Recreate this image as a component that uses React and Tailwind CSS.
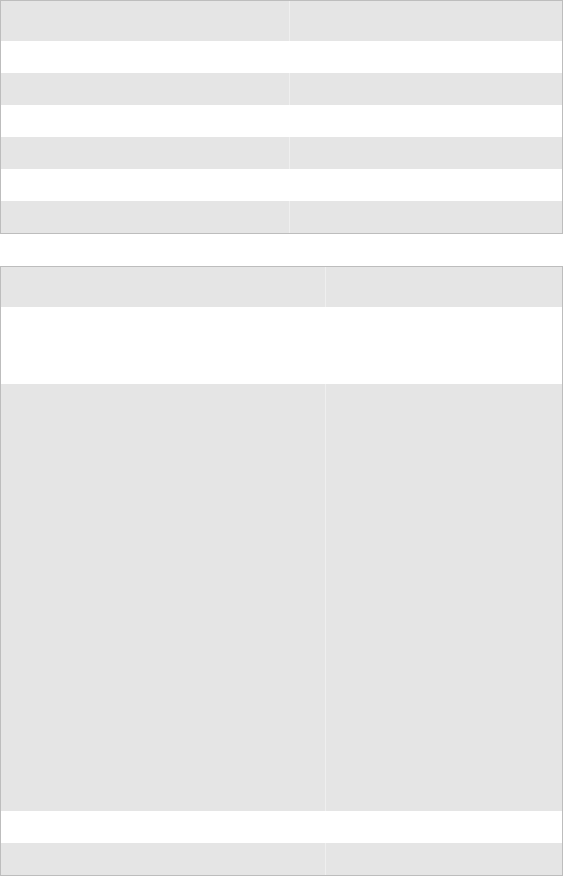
export default function App() {
  const t1 = [
    { h: "h-[40px]", g: true },
    { h: "h-[32px]", g: false },
    { h: "h-[32px]", g: true },
    { h: "h-[32px]", g: false },
    { h: "h-[32px]", g: true },
    { h: "h-[32px]", g: false },
    { h: "h-[32px]", g: true },
  ];
  const t2 = [
    { h: "h-[40px]", g: true },
    { h: "h-[77px]", g: false },
    { h: "h-[427px]", g: true },
    { h: "h-[32px]", g: false },
    { h: "h-[32px]", g: true },
  ];
  return (
    <div className="w-[563px] bg-white flex flex-col gap-[32px]" style={{ fontFamily: '"Liberation Sans", Arial, sans-serif' }}>
      <div className="border border-[#bdbdbd] flex flex-col">
        {t1.map((r, i) => (
          <div key={i} className={`flex ${r.h} ${r.g ? "bg-[#e5e5e5]" : "bg-white"}`}>
            <div className="w-[288px] shrink-0" />
            <div className={`flex-1 border-l ${r.g ? "border-[#efefef]" : "border-white"}`} />
          </div>
        ))}
      </div>
      <div className="border border-[#bdbdbd] flex flex-col">
        {t2.map((r, i) => (
          <div key={i} className={`flex ${r.h} ${r.g ? "bg-[#e5e5e5]" : "bg-white"}`}>
            <div className="w-[324px] shrink-0" />
            <div className={`flex-1 border-l ${r.g ? "border-[#efefef]" : "border-white"}`} />
          </div>
        ))}
      </div>
    </div>
  );
}
